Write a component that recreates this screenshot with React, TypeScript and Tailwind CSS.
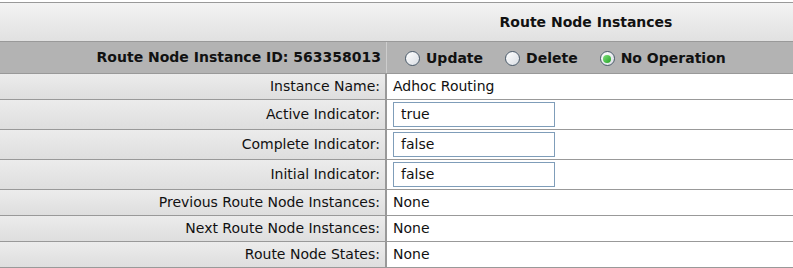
import React from "react";

type Row = { label: string; value: string; input?: boolean };

const rows: Row[] = [
  { label: "Instance Name:", value: "Adhoc Routing" },
  { label: "Active Indicator:", value: "true", input: true },
  { label: "Complete Indicator:", value: "false", input: true },
  { label: "Initial Indicator:", value: "false", input: true },
  { label: "Previous Route Node Instances:", value: "None" },
  { label: "Next Route Node Instances:", value: "None" },
  { label: "Route Node States:", value: "None" },
];

function Radio({ checked, label }: { checked?: boolean; label: string }) {
  return (
    <span className="flex items-center gap-[6px]">
      <span className="w-[15px] h-[15px] rounded-full border border-[#4a5a6a] bg-gradient-to-br from-white to-[#d9dee4] flex items-center justify-center">
        {checked && <span className="w-[8px] h-[8px] rounded-full bg-gradient-to-br from-[#7be07b] to-[#1fa31f]" />}
      </span>
      <span>{label}</span>
    </span>
  );
}

export default function App() {
  return (
    <div className="w-[793px] h-[268px] bg-white pt-[2px] overflow-hidden font-['DejaVu_Sans',Verdana,sans-serif] text-[14px] text-[#111]">
      <div className="border-t border-[#999]">
        <div className="h-[39px] flex bg-gradient-to-b from-[#f3f3f3] to-[#e1e1e1] border-b border-[#999]">
          <div className="w-[387px]" />
          <div className="flex-1 flex items-center justify-center font-bold pr-[8px]">Route Node Instances</div>
        </div>

        <div className="h-[32px] flex bg-[#b3b3b3] border-b border-[#999] font-bold">
          <div className="w-[387px] flex items-center justify-end pr-[5px] border-r border-[#cdcdcd]">
            Route Node Instance ID: 563358013
          </div>
          <div className="flex-1 flex items-center pl-[18px] gap-[22px] pt-[2px]">
            <Radio label="Update" />
            <Radio label="Delete" />
            <Radio label="No Operation" checked />
          </div>
        </div>

        {rows.map((r) => (
          <div key={r.label} className={`${r.input ? "h-[30px]" : "h-[26px]"} flex border-b border-[#999]`}>
            <div className="w-[387px] flex items-center justify-end pr-[5px] bg-gradient-to-b from-[#ececec] to-[#dedede] border-r-2 border-[#999]">
              {r.label}
            </div>
            <div className="flex-1 flex items-center pl-[6px] bg-white">
              {r.input ? (
                <div className="w-[162px] h-[25px] border border-[#7f9db9] flex items-center pl-[7px]">{r.value}</div>
              ) : (
                <span>{r.value}</span>
              )}
            </div>
          </div>
        ))}
      </div>
    </div>
  );
}
